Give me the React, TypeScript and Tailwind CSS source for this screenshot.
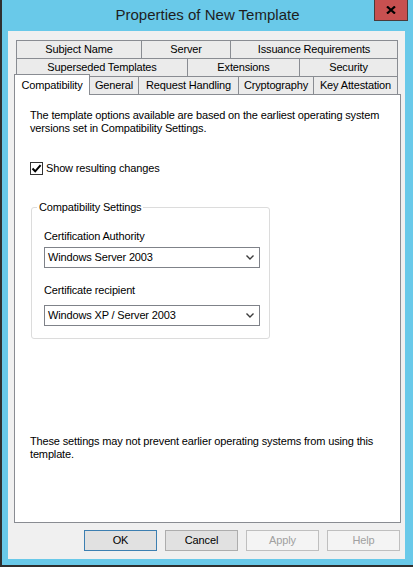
import React from 'react';

type Tab = { label: string; width: string };

const topRow: Tab[] = [
  { label: 'Subject Name', width: 'w-[126px]' },
  { label: 'Server', width: 'w-[90px]' },
  { label: 'Issuance Requirements', width: 'w-[168px]' },
];

const middleRow: Tab[] = [
  { label: 'Superseded Templates', width: 'w-[172px]' },
  { label: 'Extensions', width: 'w-[113px]' },
  { label: 'Security', width: 'w-[99px]' },
];

const bottomRow: Tab[] = [
  { label: 'General', width: 'w-[50px]' },
  { label: 'Request Handling', width: 'w-[101px]' },
  { label: 'Cryptography', width: 'w-[76px]' },
  { label: 'Key Attestation', width: 'w-[85px]' },
];

const TabButton: React.FC<{ tab: Tab }> = ({ tab }) => (
  <div
    className={`${tab.width} h-[19px] flex items-center justify-center border border-[#898c92] bg-[#ebebeb] leading-none text-black [&+*]:-ml-px`}
  >
    {tab.label}
  </div>
);

const ComboBox: React.FC<{ value: string }> = ({ value }) => (
  <div className="w-[216px] h-[21px] flex items-center justify-between border border-[#7f8289] bg-white pl-[3px] pr-[5px]">
    <span className="leading-none text-black">{value}</span>
    <svg width="8" height="5" viewBox="0 0 8 5">
      <path d="M0.5 0.5 L4 4 L7.5 0.5" fill="none" stroke="#3c3c3c" strokeWidth="1.4" />
    </svg>
  </div>
);

const DialogButton: React.FC<{ label: string; variant: 'default' | 'normal' | 'disabled' }> = ({ label, variant }) => {
  const look =
    variant === 'default'
      ? 'border-[#3c7fb1] bg-[#e1e1e1] text-black'
      : variant === 'normal'
        ? 'border-[#adadad] bg-[#e1e1e1] text-black'
        : 'border-[#bfbfbf] bg-[#f4f4f4] text-[#a0a0a0]';
  return <button className={`w-[73px] h-[21px] border leading-none ${look}`}>{label}</button>;
};

export default function App() {
  return (
    <div className="w-[413px] h-[567px] bg-[#69c9e9] border-l-2 border-b-2 border-[#2f2f2f] font-['Liberation_Sans',Arial,sans-serif] text-[11px] tracking-[-0.15px] text-black">
      {/* caption */}
      <div className="h-[31px] grid grid-cols-[1fr_auto_1fr]">
        <div />
        <div className="pt-[5px] text-[15px] tracking-normal leading-[20px] text-[#1e1e1e]">
          Properties of New Template
        </div>
        <div className="flex justify-end items-start pr-[5px]">
          <div className="w-[34px] h-[21px] flex items-center justify-center bg-[#c75050] border border-t-0 border-[#4a3a3a]">
            <svg width="10" height="8" viewBox="0 0 10 8">
              <path d="M1 0.5 L9 7.5 M9 0.5 L1 7.5" stroke="#000" strokeWidth="2.2" />
            </svg>
          </div>
        </div>
      </div>

      {/* client area */}
      <div className="ml-[6px] w-[397px] h-[528px] bg-[#f0f0f0] pt-[9px] flex flex-col">
        <div className="ml-[8px] flex">
          {topRow.map((t) => (
            <TabButton key={t.label} tab={t} />
          ))}
        </div>
        <div className="ml-[8px] -mt-px flex">
          {middleRow.map((t) => (
            <TabButton key={t.label} tab={t} />
          ))}
        </div>
        <div className="ml-[6px] -mt-[3px] -mb-px flex items-end relative z-10">
          <div className="w-[76px] h-[21px] flex items-center justify-center border border-b-0 border-[#898c92] bg-white leading-none -mr-px">
            Compatibility
          </div>
          {bottomRow.map((t) => (
            <TabButton key={t.label} tab={t} />
          ))}
        </div>

        {/* tab page */}
        <div className="ml-[6px] w-[387px] h-[429px] border border-[#898c92] bg-white px-[15px] pt-[14px] leading-[13px]">
          <p>
            The template options available are based on the earliest operating system versions set in
            Compatibility Settings.
          </p>

          <label className="mt-[27px] flex items-center gap-[3px]">
            <span className="w-[13px] h-[13px] flex items-center justify-center border border-[#333] bg-white">
              <svg width="11" height="11" viewBox="0 0 11 11">
                <path d="M1.5 5.5 L4.2 8.3 L9.6 2.2" fill="none" stroke="#000" strokeWidth="2" />
              </svg>
            </span>
            <span>Show resulting changes</span>
          </label>

          <fieldset className="mt-[25px] ml-[1px] w-[239px] border border-[#dcdcdc] rounded-[3px] pl-[12px] pb-[12px]">
            <legend className="-ml-[7px] px-[2px] leading-[14px]">Compatibility Settings</legend>
            <div className="mt-[16px]">Certification Authority</div>
            <div className="mt-[4px]">
              <ComboBox value="Windows Server 2003" />
            </div>
            <div className="mt-[16px]">Certificate recipient</div>
            <div className="mt-[8px]">
              <ComboBox value="Windows XP / Server 2003" />
            </div>
          </fieldset>

          <p className="mt-[96px]">
            These settings may not prevent earlier operating systems from using this template.
          </p>
        </div>

        <div className="mt-[7px] pr-[5px] flex justify-end gap-[8px]">
          <DialogButton label="OK" variant="default" />
          <DialogButton label="Cancel" variant="normal" />
          <DialogButton label="Apply" variant="disabled" />
          <DialogButton label="Help" variant="disabled" />
        </div>
      </div>
    </div>
  );
}
